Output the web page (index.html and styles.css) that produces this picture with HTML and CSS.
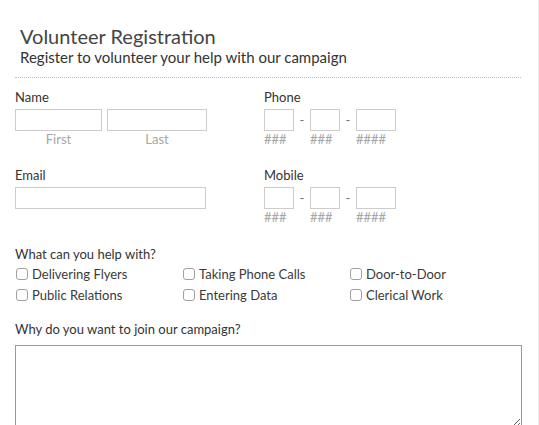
FILE: index.html
```html
<!DOCTYPE html>
<html>
<head>
<meta charset="utf-8">
<link rel="stylesheet" href="styles.css">
</head>
<body>
<div class="page">
  <div class="header">
    <h1 class="title">Volunteer Registration</h1>
    <p class="subtitle">Register to volunteer your help with our campaign</p>
  </div>
  <div class="row">
    <div class="col">
      <div class="label">Name</div>
      <div class="name-fields">
        <div class="sub">
          <input class="box w-first" type="text">
          <div class="hint center">First</div>
        </div>
        <div class="sub">
          <input class="box w-last" type="text">
          <div class="hint center">Last</div>
        </div>
      </div>
    </div>
    <div class="col">
      <div class="label">Phone</div>
      <div class="phone">
        <div class="sub"><input class="box w3" type="text"><div class="hint">###</div></div>
        <span class="dash">-</span>
        <div class="sub"><input class="box w3" type="text"><div class="hint">###</div></div>
        <span class="dash">-</span>
        <div class="sub"><input class="box w4" type="text"><div class="hint">####</div></div>
      </div>
    </div>
  </div>
  <div class="row row2">
    <div class="col">
      <div class="label">Email</div>
      <input class="box w-email" type="text">
    </div>
    <div class="col">
      <div class="label">Mobile</div>
      <div class="phone">
        <div class="sub"><input class="box w3" type="text"><div class="hint">###</div></div>
        <span class="dash">-</span>
        <div class="sub"><input class="box w3" type="text"><div class="hint">###</div></div>
        <span class="dash">-</span>
        <div class="sub"><input class="box w4" type="text"><div class="hint">####</div></div>
      </div>
    </div>
  </div>
  <div class="group">
    <div class="label">What can you help with?</div>
    <div class="checks">
      <label class="check"><span class="cb"></span>Delivering Flyers</label>
      <label class="check"><span class="cb"></span>Taking Phone Calls</label>
      <label class="check"><span class="cb"></span>Door-to-Door</label>
      <label class="check"><span class="cb"></span>Public Relations</label>
      <label class="check"><span class="cb"></span>Entering Data</label>
      <label class="check"><span class="cb"></span>Clerical Work</label>
    </div>
  </div>
  <div class="group why">
    <div class="label">Why do you want to join our campaign?</div>
    <textarea class="area"></textarea>
  </div>
</div>
</body>
</html>
```
FILE: styles.css
```css
html, body {
  margin: 0;
  padding: 0;
  background: #fff;
}
body {
  font-family: Lato, "Open Sans", sans-serif;
  color: #444;
}
.page {
  width: 539px;
  height: 425px;
  box-sizing: border-box;
  border-right: 1px solid #ececec;
  padding: 0 17px 0 15px;
  overflow: hidden;
}
.header {
  padding: 24px 0 11px 5px;
  border-bottom: 1px dotted #bbb;
}
.title {
  margin: 0;
  font-size: 20px;
  font-weight: 400;
  line-height: 24px;
  color: #444;
}
.subtitle {
  margin: 0;
  font-size: 15px;
  line-height: 18px;
  color: #333;
}
.row {
  display: flex;
  margin-top: 11px;
}
.row2 {
  margin-top: 20px;
}
.col {
  width: 249px;
}
.label {
  font-size: 13px;
  line-height: 16px;
  color: #333;
  margin-bottom: 4px;
}
.name-fields {
  display: flex;
  gap: 5px;
}
.sub {
  display: flex;
  flex-direction: column;
}
.box {
  display: block;
  box-sizing: border-box;
  height: 22px;
  margin: 0;
  padding: 0;
  border: 1px solid #ccc;
  border-radius: 0;
  background: #fff;
}
.w-first { width: 87px; }
.w-last { width: 100px; }
.w-email { width: 191px; }
.w3 { width: 30px; }
.w4 { width: 40px; }
.hint {
  font-size: 13px;
  line-height: 16px;
  color: #a6a6a6;
}
.center {
  text-align: center;
}
.phone {
  display: flex;
  align-items: flex-start;
}
.dash {
  width: 16px;
  text-align: center;
  font-size: 13px;
  line-height: 22px;
  color: #777;
}
.group {
  margin-top: 21px;
}
.checks {
  display: grid;
  grid-template-columns: 167px 167px 1fr;
  row-gap: 5px;
  margin-top: 2px;
}
.check {
  display: flex;
  align-items: center;
  font-size: 13px;
  line-height: 16px;
  color: #3a3a3a;
}
.cb {
  box-sizing: border-box;
  width: 12px;
  height: 12px;
  border: 1px solid #a0a0a0;
  border-radius: 3px;
  margin: 0 4px 0 1px;
  background: #fff;
}
.why {
  margin-top: 18px;
}
.why .label {
  margin-bottom: 8px;
}
.area {
  display: block;
  box-sizing: border-box;
  width: 507px;
  height: 83px;
  margin: 0;
  border: 1px solid #999;
  resize: both;
}
```
